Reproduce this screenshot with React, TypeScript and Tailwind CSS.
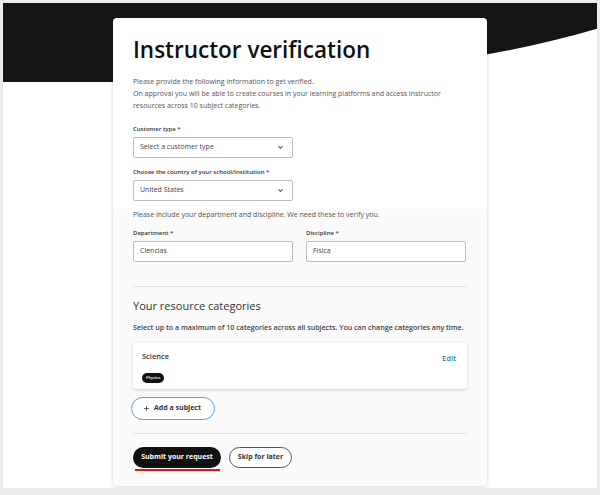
import { ChevronDown, Plus } from 'lucide-react';

const font = { fontFamily: '"Open Sans", "Noto Sans", sans-serif' };

function Label({ children }: { children: React.ReactNode }) {
  return <div className="text-[6px] leading-[8px] font-semibold text-[#333]">{children}</div>;
}

function SelectBox({ value }: { value: string }) {
  return (
    <div className="mt-[4px] flex h-[21px] w-[160px] items-center justify-between rounded-[2px] border border-[#bdbdbd] bg-white pl-[6px] pr-[8px] text-[7px] text-[#444]">
      <span>{value}</span>
      <ChevronDown size={7} strokeWidth={3.5} className="text-[#555]" />
    </div>
  );
}

function TextBox({ value }: { value: string }) {
  return (
    <div className="mt-[4px] flex h-[21px] w-[160px] items-center rounded-[2px] border border-[#bdbdbd] bg-white px-[6px] text-[7px] text-[#444]">
      {value}
    </div>
  );
}

export default function App() {
  return (
    <div
      className="relative h-[495px] w-[600px] overflow-hidden border-[3px] border-b-[7px] border-[#ececec] bg-white"
      style={font}
    >
      {/* dark header wave */}
      <svg className="absolute left-0 top-0" width="600" height="90" viewBox="0 0 600 90">
        <path d="M0 0 H600 V24 Q440 72 200 79 H0 Z" fill="#151515" />
      </svg>

      <div className="relative ml-[110px] mt-[15px] flex h-[468px] w-[374px] flex-col overflow-hidden rounded-[4px] shadow-[0_1px_4px_rgba(0,0,0,0.18)]">
        <div className="bg-white px-[20px] pt-[19px] pb-[8px]">
          <h1 className="text-[22.5px] leading-[26px] font-semibold text-[#111]">Instructor verification</h1>
          <p className="mt-[13px] text-[7px] leading-[12px] text-[#555]">
            Please provide the following information to get verified.
            <br />
            On approval you will be able to create courses in your learning platforms and access instructor
            <br />
            resources across 10 subject categories.
          </p>
          <div className="mt-[13px]">
            <Label>Customer type *</Label>
            <SelectBox value="Select a customer type" />
          </div>
          <div className="mt-[10px]">
            <Label>Choose the country of your school/institution *</Label>
            <SelectBox value="United States" />
          </div>
        </div>

        <div className="flex-1 bg-[#fafafa] px-[20px]">
          <p className="text-[7px] leading-[12px] text-[#555]">
            Please include your department and discipline. We need these to verify you.
          </p>
          <div className="mt-[8px] flex gap-[13px]">
            <div>
              <Label>Department *</Label>
              <TextBox value="Ciencias" />
            </div>
            <div>
              <Label>Discipline *</Label>
              <TextBox value="Física" />
            </div>
          </div>

          <div className="mt-[24px] h-px bg-[#e4e4e4]" />

          <h2 className="mt-[12px] text-[11px] leading-[14px] text-[#333]">Your resource categories</h2>
          <p className="mt-[10px] text-[7.1px] leading-[8px] font-semibold text-[#444]">
            Select up to a maximum of 10 categories across all subjects. You can change categories any time.
          </p>

          <div className="mt-[12px] flex h-[46px] justify-between rounded-[3px] bg-white pl-[9px] pr-[11px] pt-[8px] shadow-[0_1px_3px_rgba(0,0,0,0.18)]">
            <div>
              <div className="text-[7.5px] leading-[10px] font-semibold text-[#333]">Science</div>
              <span className="mt-[10px] inline-flex h-[10px] items-center rounded-full bg-[#111] px-[4px] text-[4px] font-semibold text-white">
                Physics
              </span>
            </div>
            <div className="pt-[2px] text-[7.5px] leading-[10px] font-semibold text-[#1f7fa8]">Edit</div>
          </div>

          <button className="-ml-[2px] mt-[8px] flex h-[23px] w-[84px] items-center gap-[4px] rounded-full border-[1.5px] border-[#4aa3f0] bg-white pl-[11px] text-[7px] font-bold text-[#333]">
            <Plus size={7} strokeWidth={2.5} />
            Add a subject
          </button>

          <div className="mt-[13px] h-px bg-[#e4e4e4]" />

          <div className="mt-[13px] flex gap-[8px]">
            <div className="flex flex-col">
              <button className="flex h-[21px] w-[88px] items-center justify-center rounded-full bg-[#111] text-[7px] font-bold text-white">
                Submit your request
              </button>
              <div className="ml-[2px] mt-[1px] h-[1.5px] w-[85px] bg-[#e0161b]" />
            </div>
            <button className="flex h-[21px] w-[63px] items-center justify-center rounded-full border border-[#555] bg-white text-[7px] font-bold text-[#333]">
              Skip for later
            </button>
          </div>
        </div>
      </div>
    </div>
  );
}
